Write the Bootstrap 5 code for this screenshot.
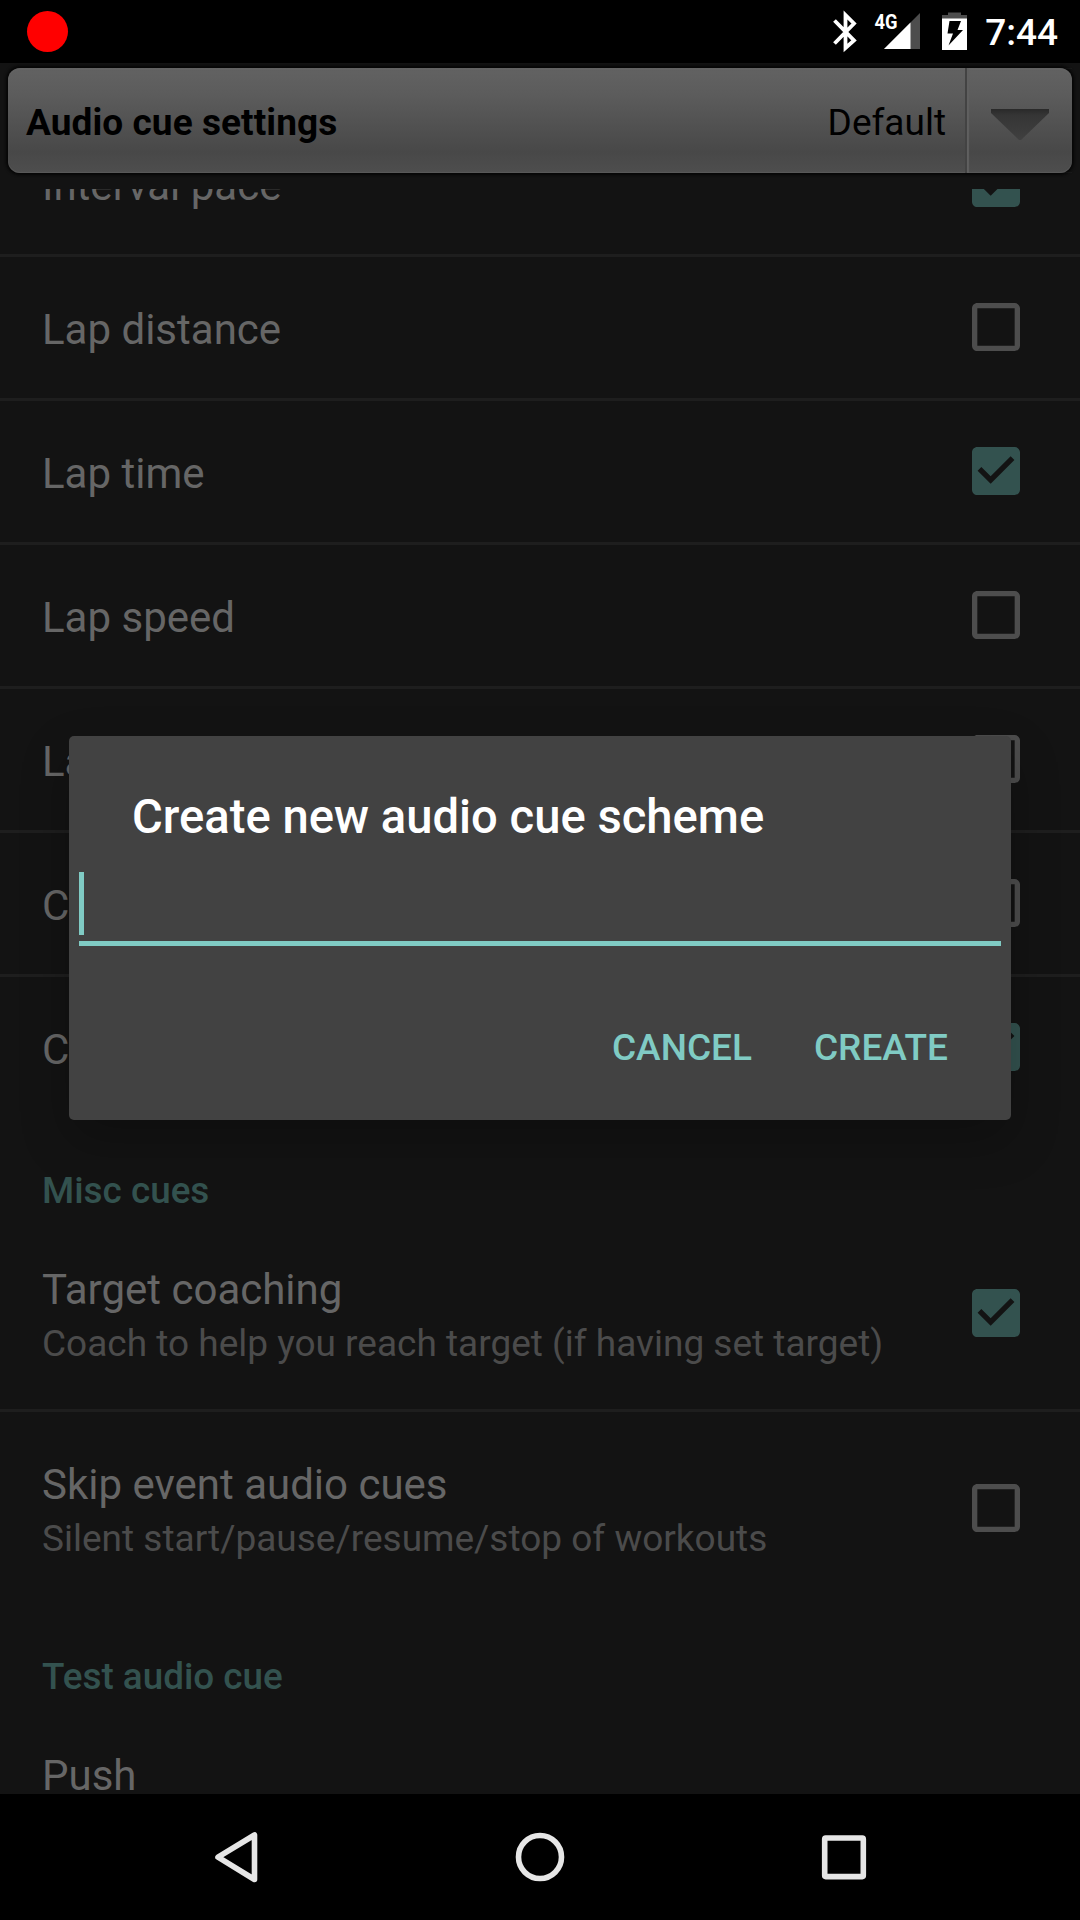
<!DOCTYPE html>
<html lang="en">
<head>
<meta charset="utf-8">
<meta name="viewport" content="width=device-width, initial-scale=1">
<title>Audio cue settings</title>
<link href="https://cdn.jsdelivr.net/npm/bootstrap@5.3.0/dist/css/bootstrap.min.css" rel="stylesheet">
<style>
body { font-family: Roboto, sans-serif; background: #000; line-height: 1.172; }
.screen { width: 1080px; height: 1920px; background: #131313; }
.statusbar { height: 63px; background: #000; color: #fff; padding: 0 22px 0 27px; }
.rec-dot { width: 41px; height: 41px; background: #f00; }
.clock { font-size: 37px; font-weight: 500; padding-top: 3px; }
.header-zone { height: 126px; padding: 5px 8px 15px; }
.scheme-bar { height: 105px; border-radius: 12px; font-size: 37px; color: #000;
  background: linear-gradient(#626262, #5c5c5c 25%, #484848 80%, #4e4e4e);
  box-shadow: 0 0 3px 2px #060606, inset 0 2px 1px #6a6a6a55, inset 0 -1px 1px #6668; }
.bar-label { padding: 4px 0 0 18px; letter-spacing: .07px; }
.bar-value { padding: 4px 19px 0 0; }
.scheme-arrow { width: 107px; padding-top: 7px; border-left: 2px solid #434343; box-shadow: inset 2px 0 1px #606060; }
.pref-view { min-height: 0; }
.pref-list { margin-top: -76px; }
.pref { padding: 0 60px 1px 42px; min-height: 141px; border-color: #1e1e1e; }
.pref + .pref { border-top: 3px solid #1e1e1e; min-height: 144px; }
.pref-title { font-size: 42px; color: #666; padding-top: 5px; }
.pref.two-line { min-height: 192px; padding-bottom: 0; }
.pref.two-line + .pref.two-line { min-height: 195px; }
.two-line .pref-title { padding-top: 4.5px; }
.pref-sub { font-size: 37px; color: #4b4b4b; padding-top: 8.5px; }
.tick { width: 48px; height: 48px; fill: #4d4d4d; }
.tick.on { fill: #33524f; }
.category { height: 99px; padding: 51px 42px 0; font-size: 36.85px; font-weight: 500; color: #33524f; }
.softkeys { height: 126px; background: #000; }
.softkeys svg { fill: none; stroke: #e6e6e6; }
.scheme-dialog { left: 69px; top: 736px; width: 942px; height: 384px; background: #424242; border-radius: 5px;
  box-shadow: 0 20px 50px rgba(0,0,0,.24); }
.dialog-heading { font-size: 47.2px; font-weight: 500; color: #fff; padding: 53px 63px 0; height: 136px; }
.name-field { height: 74px; margin: 0 10px; border-bottom: 5px solid #80cbc4; }
.caret { width: 5px; height: 63px; background: #80cbc4; }
.dialog-action { font-size: 37px; font-weight: 500; color: #80cbc4; line-height: 1.172; }
.actions { padding: 80px 63px 0; gap: 62px; }
</style>
</head>
<body>
<div class="screen position-relative d-flex flex-column overflow-hidden">
  <header class="statusbar flex-shrink-0 d-flex align-items-center justify-content-between">
    <span class="rec-dot rounded-circle"></span>
    <div class="d-flex align-items-center">
      <svg width="144" height="63" viewBox="830 0 144 63">
        <path d="M835.500 20.500L855 40.500L846.500 48V15L855 23.500L835.500 43.500" fill="none" stroke="#fff" stroke-width="3.8"/>
        <text x="875.5" y="29" font-size="21" font-weight="700" fill="#fff" textLength="23" lengthAdjust="spacingAndGlyphs">4G</text>
        <path d="M921 13V49H885Z" fill="#4d4d4d"/><path d="M911.500 22.500V49H885Z" fill="#fff"/>
        <path d="M949 12.500H962V15H968V19H943V15H949Z" fill="#4d4d4d"/>
        <path d="M943 18.500H968V50H943Z" fill="#fff"/>
        <path d="M950.500 21H962L958.500 30H964L949.500 45.500L954 33.500H948.500Z" fill="#000"/>
      </svg>
      <span class="clock ms-2 ps-1">7:44</span>
    </div>
  </header>
  <div class="header-zone flex-shrink-0">
    <div class="scheme-bar d-flex align-items-stretch">
      <span class="bar-label fw-bold align-self-center flex-grow-1">Audio cue settings</span>
      <span class="bar-value align-self-center">Default</span>
      <span class="scheme-arrow d-flex align-items-center justify-content-center">
        <svg width="60" height="34" viewBox="0 0 60 34"><defs><linearGradient id="arrowFill" x2="0" y2="1"><stop stop-color="#292929"/><stop offset=".2" stop-color="#353535"/><stop offset="1" stop-color="#404040"/></linearGradient></defs><path d="M1 2H59V6L31 33H29L1 6Z" fill="url(#arrowFill)"/></svg>
      </span>
    </div>
  </div>
  <svg class="d-none">
    <symbol id="box-on" viewBox="3 3 18 18"><path d="M19 3H5c-1.110 0-2 .9-2 2v14c0 1.100.89 2 2 2h14c1.110 0 2-.9 2-2V5c0-1.100-.89-2-2-2zm-9 13.800l-4.900-4.900 1.410-1.410L10 13.970l7.490-7.490L18.900 7.900z"/></symbol>
    <symbol id="box-off" viewBox="3 3 18 18"><path d="M19 5v14H5V5h14m0-2H5c-1.100 0-2 .9-2 2v14c0 1.100.9 2 2 2h14c1.100 0 2-.9 2-2V5c0-1.100-.9-2-2-2z"/></symbol>
  </svg>
  <main class="pref-view flex-grow-1 overflow-hidden">
    <div class="pref-list">
      <div class="pref d-flex align-items-center justify-content-between"><span class="pref-title">Interval pace</span><svg class="tick on"><use href="#box-on"/></svg></div>
      <div class="pref d-flex align-items-center justify-content-between"><span class="pref-title">Lap distance</span><svg class="tick"><use href="#box-off"/></svg></div>
      <div class="pref d-flex align-items-center justify-content-between"><span class="pref-title">Lap time</span><svg class="tick on"><use href="#box-on"/></svg></div>
      <div class="pref d-flex align-items-center justify-content-between"><span class="pref-title">Lap speed</span><svg class="tick"><use href="#box-off"/></svg></div>
      <div class="pref d-flex align-items-center justify-content-between"><span class="pref-title">La</span><svg class="tick"><use href="#box-off"/></svg></div>
      <div class="pref d-flex align-items-center justify-content-between"><span class="pref-title">C</span><svg class="tick"><use href="#box-off"/></svg></div>
      <div class="pref d-flex align-items-center justify-content-between"><span class="pref-title">C</span><svg class="tick on"><use href="#box-on"/></svg></div>
      <div class="category">Misc cues</div>
      <div class="pref two-line d-flex align-items-center justify-content-between"><div><div class="pref-title">Target coaching</div><div class="pref-sub">Coach to help you reach target (if having set target)</div></div><svg class="tick on"><use href="#box-on"/></svg></div>
      <div class="pref two-line d-flex align-items-center justify-content-between"><div><div class="pref-title">Skip event audio cues</div><div class="pref-sub">Silent start/pause/resume/stop of workouts</div></div><svg class="tick"><use href="#box-off"/></svg></div>
      <div class="category">Test audio cue</div>
      <div class="pref two-line d-flex align-items-center"><div><div class="pref-title">Push</div><div class="pref-sub">&nbsp;</div></div></div>
    </div>
  </main>
  <nav class="softkeys flex-shrink-0">
    <svg width="1080" height="126" viewBox="0 1794 1080 126">
      <path d="M254.500 1835V1879.500L218 1857.200Z" stroke-width="5.600" stroke-linejoin="round"/>
      <circle cx="540" cy="1857" r="21.500" stroke-width="5.600"/>
      <rect x="824.700" y="1838" width="38.600" height="38.600" rx="1" stroke-width="5.600"/>
    </svg>
  </nav>
  <section class="scheme-dialog position-absolute" role="dialog">
    <h1 class="dialog-heading m-0">Create new audio cue scheme</h1>
    <div class="name-field"><div class="caret"></div></div>
    <div class="actions d-flex justify-content-end">
      <button class="dialog-action border-0 bg-transparent p-0">CANCEL</button>
      <button class="dialog-action border-0 bg-transparent p-0">CREATE</button>
    </div>
  </section>
</div>
<script src="https://cdn.jsdelivr.net/npm/bootstrap@5.3.0/dist/js/bootstrap.bundle.min.js"></script>
</body>
</html>
